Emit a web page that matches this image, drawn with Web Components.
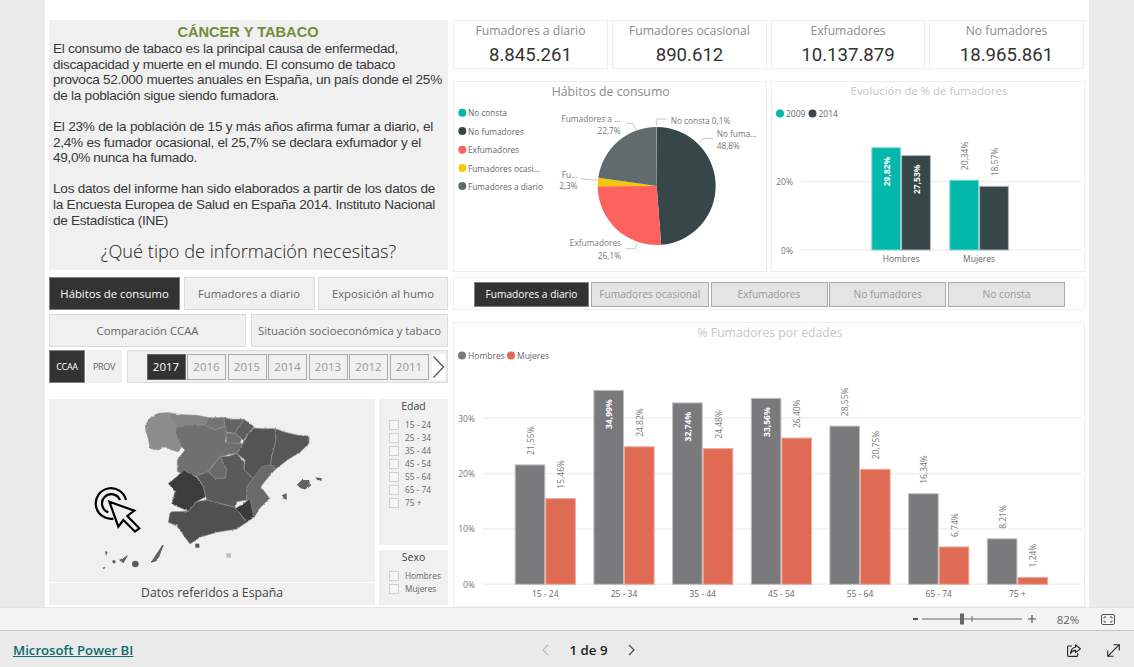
<!DOCTYPE html>
<html lang="es">
<head>
<meta charset="utf-8">
<title>Cáncer y tabaco</title>
<style>
html, body { margin: 0; height: 100%; overflow: hidden; background: #eaeaea; }
body { font-family: "Open Sans", "Noto Sans", sans-serif; }
</style>
</head>
<body>
<pbi-viewer>
    <pbi-text-card slot="left">
        <span slot="title">CÁNCER Y TABACO</span>
        <p>
            <pbi-text-line fit="345">El consumo de tabaco es la principal causa de enfermedad,</pbi-text-line>
            <pbi-text-line fit="342">discapacidad y muerte en el mundo. El consumo de tabaco</pbi-text-line>
            <pbi-text-line fit="389">provoca 52.000 muertes anuales en España, un país donde el 25%</pbi-text-line>
            <pbi-text-line fit="226">de la población sigue siendo fumadora.</pbi-text-line>
        </p>
        <p>
            <pbi-text-line fit="380">El 23% de la población de 15 y más años afirma fumar a diario, el</pbi-text-line>
            <pbi-text-line fit="368">2,4% es fumador ocasional, el 25,7% se declara exfumador y el</pbi-text-line>
            <pbi-text-line fit="144">49,0% nunca ha fumado.</pbi-text-line>
        </p>
        <p>
            <pbi-text-line fit="382">Los datos del informe han sido elaborados a partir de los datos de</pbi-text-line>
            <pbi-text-line fit="382">la Encuesta Europea de Salud en España 2014. Instituto Nacional</pbi-text-line>
            <pbi-text-line fit="115">de Estadística (INE)</pbi-text-line>
        </p>
        <span slot="question">¿Qué tipo de información necesitas?</span>
    </pbi-text-card>
    <pbi-button-row slot="left" columns="131px 131px 130px" height="33">
        <pbi-nav-button active>Hábitos de consumo</pbi-nav-button>
        <pbi-nav-button>Fumadores a diario</pbi-nav-button>
        <pbi-nav-button>Exposición al humo</pbi-nav-button>
    </pbi-button-row>
    <pbi-button-row slot="left" columns="197px 197px" height="33" gap="5px">
        <pbi-nav-button>Comparación CCAA</pbi-nav-button>
        <pbi-nav-button>Situación socioeconómica y tabaco</pbi-nav-button>
    </pbi-button-row>
    <pbi-year-slicer slot="left"></pbi-year-slicer>
    <pbi-filter-area slot="left">
        <pbi-spain-map slot="map"></pbi-spain-map>
        <pbi-check-slicer slot="edad" label="Edad" items="15 - 24,25 - 34,35 - 44,45 - 54,55 - 64,65 - 74,75 +"></pbi-check-slicer>
        <pbi-check-slicer slot="sexo" label="Sexo" items="Hombres,Mujeres"></pbi-check-slicer>
    </pbi-filter-area>

    <pbi-kpi-row slot="right">
        <pbi-kpi label="Fumadores a diario" value="8.845.261"></pbi-kpi>
        <pbi-kpi label="Fumadores ocasional" value="890.612"></pbi-kpi>
        <pbi-kpi label="Exfumadores" value="10.137.879"></pbi-kpi>
        <pbi-kpi label="No fumadores" value="18.965.861"></pbi-kpi>
    </pbi-kpi-row>
    <pbi-chart-row slot="right">
        <pbi-pie-chart></pbi-pie-chart>
        <pbi-column-chart chart="evolucion"></pbi-column-chart>
    </pbi-chart-row>
    <pbi-tab-strip slot="right">
        <pbi-nav-button tab active>Fumadores a diario</pbi-nav-button>
        <pbi-nav-button tab>Fumadores ocasional</pbi-nav-button>
        <pbi-nav-button tab>Exfumadores</pbi-nav-button>
        <pbi-nav-button tab>No fumadores</pbi-nav-button>
        <pbi-nav-button tab>No consta</pbi-nav-button>
    </pbi-tab-strip>
    <pbi-column-chart slot="right" chart="edades"></pbi-column-chart>
</pbi-viewer>
<pbi-zoom-bar></pbi-zoom-bar>
<pbi-footer-bar></pbi-footer-bar>

<script>
const FONT = '"Open Sans", "Noto Sans", sans-serif';
const BODY_FONT = '13.6px "Liberation Sans"';

const CHARTS = {
    evolucion: {
        box: [771, 81, 314, 191],
        title: 'Evolución de % de fumadores',
        titleX: 929, titleY: 90, titleSize: 11.4,
        zero: 250, perUnit: 3.43,
        ticks: [0, 20],
        gridFrom: 801, gridTo: 1082, tickX: 793,
        barWidth: 29.8, inside: 25,
        starts: [871.3, 949.3],
        catY: 258,
        legend: [[780, 'teal', '2009'], [812.5, 'dark', '2014']],
        legendY: 113.5,
        colors: { teal: ['#01b8aa', '#80dcd4'], dark: ['#374649', '#b0b8ba'] },
        series: ['teal', 'dark'],
        cats: [['Hombres', 29.82, 27.53], ['Mujeres', 20.34, 18.57]]
    },
    edades: {
        box: [453, 322, 632, 285],
        title: '% Fumadores por edades',
        titleX: 770, titleY: 332, titleSize: 12.2,
        zero: 584.3, perUnit: 5.54,
        ticks: [0, 10, 20, 30],
        gridFrom: 483, gridTo: 1082, tickX: 475,
        barWidth: 30.6, inside: 30,
        starts: [514.7, 593.4, 672.1, 750.8, 829.4, 908.1, 986.8],
        catY: 593,
        legend: [[462, 'grey', 'Hombres'], [511, 'red', 'Mujeres']],
        legendY: 355.5,
        colors: { grey: ['#7a7a7c', '#bdbdbd'], red: ['#e06b54', '#eea797'] },
        series: ['grey', 'red'],
        cats: [
            ['15 - 24', 21.55, 15.46], ['25 - 34', 34.99, 24.82], ['35 - 44', 32.74, 24.48],
            ['45 - 54', 33.56, 26.40], ['55 - 64', 28.55, 20.75], ['65 - 74', 16.34, 6.74],
            ['75 +', 8.21, 1.24]
        ]
    }
};

// base class, same render flow for every element
class PbiElement extends HTMLElement {
    constructor() {
        super();
        this.template = document.createElement('template');
        this.attachShadow({ mode: 'open' });
    }
    connectedCallback() {
        this.render();
    }
    render() {
        this.shadowRoot.innerHTML = '';
        this.template.innerHTML = this.html;
        this.shadowRoot.appendChild(this.template.content.cloneNode(true));
    }
}

class PbiViewer extends PbiElement {
    get html() {
        return `
        <style>
        :host { display: block; height: 607px; padding: 0 45px; box-sizing: border-box; }
        .canvas {
            background: #fff;
            height: 607px;
            box-sizing: border-box;
            padding: 20px 4px 0;
            display: grid;
            grid-template-columns: 399px 632px;
            column-gap: 5px;
            overflow: hidden;
        }
        .col { display: flex; flex-direction: column; min-width: 0; }
        </style>
        <div class="canvas">
            <div class="col"><slot name="left"></slot></div>
            <div class="col"><slot name="right"></slot></div>
        </div>`;
    }
}

class PbiTextCard extends PbiElement {
    get html() {
        return `
        <style>
        :host {
            display: block;
            height: 250px;
            box-sizing: border-box;
            background: #f0f0f0;
            padding: 3px 1px 0 4px;
            color: #383838;
            font: 13.6px/15.6px "Liberation Sans", Arial, sans-serif;
        }
        .title {
            text-align: center;
            color: #6f8f35;
            font-weight: bold;
            font-size: 14.6px;
            line-height: 18px;
            margin-right: 4px;
        }
        ::slotted(p) { margin: 0 0 15.6px; }
        .question {
            text-align: center;
            margin: -5px 3px 0 0;
            font: 300 18.2px/24px ${FONT};
            color: #222;
        }
        </style>
        <div class="title"><slot name="title"></slot></div>
        <slot></slot>
        <div class="question"><slot name="question"></slot></div>`;
    }
}

// one text line, spaced so it takes the width given in fit
class PbiTextLine extends PbiElement {
    get html() {
        const text = this.textContent;
        const ctx = document.createElement('canvas').getContext('2d');
        ctx.font = BODY_FONT;
        const spacing = (Number(this.getAttribute('fit')) - ctx.measureText(text).width) / text.length;
        return `
        <style>
        :host { display: block; white-space: nowrap; letter-spacing: ${spacing.toFixed(3)}px; }
        </style>
        <slot></slot>`;
    }
}

class PbiButtonRow extends PbiElement {
    get html() {
        return `
        <style>
        :host { display: block; margin-top: ${this.getAttribute('gap') ? 4 : 7}px; }
        .row {
            display: grid;
            grid-template-columns: ${this.getAttribute('columns')};
            column-gap: ${this.getAttribute('gap') || '3.5px'};
            height: ${this.getAttribute('height')}px;
        }
        </style>
        <div class="row"><slot></slot></div>`;
    }
}

class PbiNavButton extends PbiElement {
    get html() {
        const tab = this.hasAttribute('tab');
        const active = this.hasAttribute('active');
        let bg = '#f0f0f0', border = '#dcdcdc', color = '#666';
        if (tab) { bg = '#e4e4e4'; border = '#ababab'; color = '#999'; }
        if (active) { bg = '#333'; border = '#808080'; color = '#fff'; }
        return `
        <style>
        :host {
            display: flex;
            align-items: center;
            justify-content: center;
            box-sizing: border-box;
            min-width: 0;
            white-space: nowrap;
            padding-bottom: 1px;
            background: ${bg};
            border: 1.5px solid ${border};
            color: ${color};
            font: ${tab ? '10.2px' : '11.3px'} ${FONT};
        }
        </style>
        <slot></slot>`;
    }
}

class PbiYearSlicer extends PbiElement {
    get html() {
        const years = [2017, 2016, 2015, 2014, 2013, 2012, 2011];
        return `
        <style>
        :host { display: flex; height: 33px; margin-top: 3px; font-family: ${FONT}; }
        .mode {
            width: 36px;
            display: flex;
            align-items: center;
            justify-content: center;
            box-sizing: border-box;
            font-size: 9px;
            letter-spacing: -.3px;
            background: #f0f0f0;
            color: #666;
        }
        .mode.on { background: #333; color: #fff; border: 1px solid #808080; }
        .mode + .mode { margin-left: 1px; }
        .years {
            margin-left: 5px;
            flex: 1;
            box-sizing: border-box;
            background: #f0f0f0;
            border: 1.5px solid #dcdcdc;
            display: flex;
            align-items: center;
            padding-left: 18.5px;
            gap: 1.5px;
        }
        .year {
            width: 39px;
            height: 26px;
            box-sizing: border-box;
            border: 1.5px solid #ababab;
            display: flex;
            align-items: center;
            justify-content: center;
            color: #999;
            font-size: 11.5px;
        }
        .year.on { background: #333; color: #fff; border-color: #666; }
        .next { margin-left: 2px; width: 13px; height: 26px; background: #fff; flex: none; }
        svg { display: block; }
        </style>
        <div class="mode on">CCAA</div>
        <div class="mode">PROV</div>
        <div class="years">
            ${years.map((y, i) => `<div class="year ${i === 0 ? 'on' : ''}">${y}</div>`).join('')}
            <div class="next"><svg width="13" height="26" viewBox="0 0 13 26"><path d="M1.5 2.5 L11.5 13 L1.5 23.5" fill="none" stroke="#555" stroke-width="1.3"/></svg></div>
        </div>`;
    }
}

class PbiFilterArea extends PbiElement {
    get html() {
        return `
        <style>
        :host {
            display: grid;
            margin-top: 16px;
            grid-template-columns: 326px 69px;
            grid-template-rows: 146px 55px;
            column-gap: 4px;
            row-gap: 5px;
        }
        .map { grid-row: 1 / 3; }
        </style>
        <div class="map"><slot name="map"></slot></div>
        <slot name="edad"></slot>
        <slot name="sexo"></slot>`;
    }
}

class PbiSpainMap extends PbiElement {
    get html() {
        const regions = [
            ['#8c8c8c', '316,465 330,445 355,430 385,428 392,445 408,472 405,490 415,510 425,530 415,545 395,540 375,530 355,540 330,535 325,505 318,485'],
            ['#848484', '385,428 420,434 470,436 505,443 495,465 465,462 408,472 392,445'],
            ['#747474', '495,465 505,443 552,443 555,468 525,480 505,470'],
            ['#707070', '408,472 465,462 495,465 525,480 555,468 560,490 555,515 590,520 610,520 590,550 560,555 540,560 515,590 505,605 470,618 440,618 412,604 412,570 435,540 425,530 415,510 405,490'],
            ['#646464', '552,443 580,448 612,448 590,480 585,490 560,487 555,468'],
            ['#6e6e6e', '558,490 585,490 605,505 600,520 560,518'],
            ['#5e5e5e', '612,448 642,470 625,490 610,512 605,505 585,490 590,480'],
            ['#545454', '642,474 670,476 705,476 708,510 695,560 692,585 665,605 640,625 612,600 615,570 590,550 610,520 625,490'],
            ['#585858', '705,476 740,488 775,496 807,498 807,520 782,545 742,570 707,597 692,585 695,560 708,510'],
            ['#6a6a6a', '665,590 692,585 707,597 682,625 662,650 689,685 662,712 642,742 620,690 620,650 640,625'],
            ['#6a6a6a', '505,605 540,560 560,600 555,625 525,625'],
            ['#5a5a5a', '470,618 505,605 525,625 555,625 560,600 540,560 570,558 590,550 612,575 612,600 640,625 620,650 620,690 590,695 585,712 500,690 490,650'],
            ['#3c3c3c', '432,600 470,622 490,650 497,680 470,695 445,724 395,702 405,665 385,640 405,625'],
            ['#505050', '395,725 445,724 470,695 500,690 585,712 600,730 620,757 590,777 530,787 480,802 450,822 435,802 410,767 385,757 390,730'],
            ['#3a3a3a', '585,715 605,705 630,686 642,742 620,757 600,730']
        ];
        const islands = [
            '770,645 785,630 808,630 810,650 790,660',
            '826,622 845,625 845,633 830,628',
            '727,675 740,670 740,690 730,685',
            '237,870 265,855 250,880',
            '332,878 347,855 367,825 371,825 358,860 345,875',
            '195,843 203,846 198,858',
            '187,893 197,890 192,898'
        ];
        return `
        <style>
        :host { display: block; height: 206px; }
        .map { background: #f0f0f0; height: 183px; }
        .caption {
            margin-top: 1px;
            height: 22px;
            box-sizing: border-box;
            padding-bottom: 4px;
            background: #f0f0f0;
            display: flex;
            align-items: center;
            justify-content: center;
            color: #444;
            font: 12.2px ${FONT};
        }
        svg { display: block; }
        </style>
        <div class="map">
            <svg width="326" height="183" viewBox="27 387 978 549">
                <defs>
                    <filter id="rough" x="-5%" y="-5%" width="110%" height="110%" color-interpolation-filters="sRGB">
                        <feTurbulence type="fractalNoise" baseFrequency="0.13" numOctaves="2" seed="4" result="n"/>
                        <feDisplacementMap in="SourceGraphic" in2="n" scale="7" xChannelSelector="R" yChannelSelector="G"/>
                        <feGaussianBlur stdDeviation="0.9"/>
                    </filter>
                </defs>
                <g filter="url(#rough)" stroke="#8e8e8e" stroke-width="2" stroke-linejoin="round">
                    ${regions.map(r => `<polygon fill="${r[0]}" points="${r[1]}"/>`).join('')}
                </g>
                <g fill="#626262" filter="url(#rough)">
                    ${islands.map(p => `<polygon points="${p}"/>`).join('')}
                </g>
                <circle cx="286" cy="882" r="10" fill="#5c5c5c"/>
                <circle cx="222" cy="875" r="5" fill="#5c5c5c"/>
                <rect x="466" y="821" width="12" height="12" fill="#555"/>
                <rect x="559" y="850" width="14" height="13" fill="#bcbcbc"/>
                <g fill="none" stroke="#000" stroke-width="6.5">
                    <path d="M258 690 A46 46 0 1 0 220 746"/>
                    <path d="M240 690 A28 28 0 1 0 205 727"/>
                </g>
                <path d="M208 695 L283 722 L262 738 L298 775 L285 785 L250 750 L235 770 Z" fill="#f0f0f0" stroke="#000" stroke-width="6.5" stroke-linejoin="miter"/>
            </svg>
        </div>
        <div class="caption">Datos referidos a España</div>`;
    }
}

class PbiCheckSlicer extends PbiElement {
    get html() {
        const items = this.getAttribute('items').split(',');
        return `
        <style>
        :host {
            display: block;
            background: #f0f0f0;
            box-sizing: border-box;
            padding-top: 1px;
            font-family: ${FONT};
            color: #666;
            overflow: hidden;
        }
        .head { text-align: center; font-size: 10.5px; line-height: 13px; color: #444; margin-bottom: 5px; }
        .item { display: flex; align-items: center; height: 13px; padding-left: 10px; font-size: 8.3px; }
        .box { width: 10px; height: 10px; box-sizing: border-box; border: 1px solid #cfcfcf; margin-right: 6px; background: #f4f4f4; }
        </style>
        <div class="head">${this.getAttribute('label')}</div>
        ${items.map(i => `<div class="item"><span class="box"></span>${i}</div>`).join('')}`;
    }
}

class PbiKpiRow extends PbiElement {
    get html() {
        return `
        <style>
        :host { display: grid; grid-template-columns: 155px 155px 154px 155px; column-gap: 4px; height: 49px; }
        </style>
        <slot></slot>`;
    }
}

class PbiKpi extends PbiElement {
    get html() {
        return `
        <style>
        :host {
            display: flex;
            flex-direction: column;
            align-items: center;
            box-sizing: border-box;
            border: 1px solid #eeeeee;
            padding-top: 2px;
        }
        .label { font: 12.2px/16px ${FONT}; color: #8c8c8c; }
        .value { font: 18.6px/26px Roboto, ${FONT}; color: #333; margin-top: 3px; }
        </style>
        <div class="label">${this.getAttribute('label')}</div>
        <div class="value">${this.getAttribute('value')}</div>`;
    }
}

class PbiChartRow extends PbiElement {
    get html() {
        return `
        <style>
        :host { display: grid; grid-template-columns: 314px 314px; column-gap: 4px; height: 191px; margin-top: 12px; }
        </style>
        <slot></slot>`;
    }
}

class PbiPieChart extends PbiElement {
    get html() {
        const cx = 656.7, cy = 186, r = 59;
        const slices = [
            ['#374649', 48.8], ['#fd625e', 26.1], ['#f2c80f', 2.3], ['#5f6b6d', 22.7], ['#7f9a9a', 0.1]
        ];
        let acc = 0;
        const paths = slices.map(s => {
            const a0 = acc / 100 * 2 * Math.PI;
            acc += s[1];
            const a1 = acc / 100 * 2 * Math.PI;
            const large = s[1] > 50 ? 1 : 0;
            const p = a => `${(cx + r * Math.sin(a)).toFixed(2)} ${(cy - r * Math.cos(a)).toFixed(2)}`;
            return `<path d="M${cx} ${cy} L${p(a0)} A${r} ${r} 0 ${large} 1 ${p(a1)} Z" fill="${s[0]}"/>`;
        }).join('');
        const legend = [
            ['#01b8aa', 'No consta', 112.7], ['#374649', 'No fumadores', 131], ['#fd625e', 'Exfumadores', 149.7],
            ['#f2c80f', 'Fumadores ocasi...', 168], ['#5f6b6d', 'Fumadores a diario', 186]
        ];
        const labels = [
            [620.7, 118, 'end', 'Fumadores a ...'], [620.7, 130, 'end', '22,7%'],
            [670.7, 120, 'start', 'No consta 0,1%'],
            [716.7, 133.3, 'start', 'No fuma...'], [716.7, 145, 'start', '48,8%'],
            [577.7, 174, 'end', 'Fu...'], [577.7, 185, 'end', '2,3%'],
            [621, 242.7, 'end', 'Exfumadores'], [621, 255, 'end', '26,1%']
        ];
        const lines = [
            '625.7,123.3 632.7,123.3 636,130', '656.7,125.7 656.7,119 666.7,119',
            '698.3,143.3 704,138.3 713.3,138.3', '580,178.7 597,180', '625.7,248.7 635,248.7 637.3,243.3'
        ];
        return `
        <style>
        :host { display: block; box-sizing: border-box; border: 1px solid #eeeeee; height: 191px; }
        svg { display: block; position: relative; left: -1px; top: -1px; font-family: ${FONT}; }
        text { dominant-baseline: central; }
        </style>
        <svg width="314" height="191" viewBox="453 81 314 191">
            <text x="610.7" y="91" text-anchor="middle" font-size="12.3" fill="#8c8c8c">Hábitos de consumo</text>
            ${legend.map(l => `<circle cx="462.3" cy="${l[2]}" r="4" fill="${l[0]}"/><text x="468" y="${l[2]}" font-size="8.3" fill="#666">${l[1]}</text>`).join('')}
            ${paths}
            ${lines.map(l => `<polyline points="${l}" fill="none" stroke="#c8c8c8" stroke-width="1"/>`).join('')}
            ${labels.map(l => `<text x="${l[0]}" y="${l[1]}" text-anchor="${l[2]}" font-size="8.3" fill="#777">${l[3]}</text>`).join('')}
        </svg>`;
    }
}

class PbiColumnChart extends PbiElement {
    get html() {
        const c = CHARTS[this.getAttribute('chart')];
        const [bx, by, bw, bh] = c.box;
        const fmt = v => v.toFixed(2).replace('.', ',') + '%';
        let grid = '', bars = '', labels = '', cats = '';
        c.ticks.forEach(t => {
            const y = c.zero - t * c.perUnit;
            grid += `<line x1="${c.gridFrom}" x2="${c.gridTo}" y1="${y}" y2="${y}" stroke="#f0f0f0" stroke-width="1.5"/>`;
            labels += `<text x="${c.tickX}" y="${y}" text-anchor="end" font-size="8.5" fill="#777">${t}%</text>`;
        });
        c.cats.forEach((cat, i) => {
            const x0 = c.starts[i];
            cats += `<text x="${x0 + c.barWidth}" y="${c.catY}" text-anchor="middle" font-size="8.5" fill="#666">${cat[0]}</text>`;
            [cat[1], cat[2]].forEach((v, s) => {
                const col = c.colors[c.series[s]];
                const top = c.zero - v * c.perUnit;
                const x = x0 + s * c.barWidth;
                bars += `<rect x="${x + .5}" y="${top}" width="${c.barWidth - 1}" height="${c.zero - top}" fill="${col[0]}" stroke="${col[1]}" stroke-width="1"/>`;
                const inside = v > c.inside;
                const ly = inside ? top + 9 : top - 10;
                labels += `<text transform="translate(${x + c.barWidth / 2} ${ly}) rotate(-90)" text-anchor="${inside ? 'end' : 'start'}" font-size="8.5" font-weight="${inside ? 700 : 400}" fill="${inside ? '#fff' : '#777'}">${fmt(v)}</text>`;
            });
        });
        const legend = c.legend.map(l => {
            const col = c.colors[l[1]][0];
            return `<circle cx="${l[0]}" cy="${c.legendY}" r="4" fill="${col}"/><text x="${l[0] + 6}" y="${c.legendY}" font-size="8.5" fill="#666">${l[2]}</text>`;
        }).join('');
        return `
        <style>
        :host { display: block; box-sizing: border-box; border: 1px solid #eeeeee; height: ${bh}px; ${bh > 200 ? 'margin-top: 12px;' : ''} }
        svg { display: block; position: relative; left: -1px; top: -1px; font-family: ${FONT}; }
        text { dominant-baseline: central; }
        </style>
        <svg width="${bw}" height="${bh}" viewBox="${bx} ${by} ${bw} ${bh}">
            <text x="${c.titleX}" y="${c.titleY}" text-anchor="middle" font-size="${c.titleSize}" fill="#c6c6c6">${c.title}</text>
            ${legend}${grid}${bars}${labels}${cats}
        </svg>`;
    }
}

class PbiTabStrip extends PbiElement {
    get html() {
        return `
        <style>
        :host {
            display: block;
            margin-top: 5px;
            height: 33px;
            box-sizing: border-box;
            border: 1px solid #f0f0f0;
            padding: 4px 0 0 20px;
        }
        .tabs {
            display: grid;
            grid-template-columns: 115px 118px 117px 117px 117px;
            column-gap: 1.75px;
            height: 25px;
        }
        </style>
        <div class="tabs"><slot></slot></div>`;
    }
}

class PbiZoomBar extends PbiElement {
    get html() {
        return `
        <style>
        :host {
            display: flex;
            justify-content: flex-end;
            align-items: center;
            box-sizing: border-box;
            background: #f3f3f3;
            border-top: 1px solid #e4e4e4;
            border-bottom: 1px solid #c8c8c8;
            height: 24px;
            font-family: ${FONT};
            color: #666;
            padding-right: 19px;
        }
        svg { display: block; }
        .pct { font-size: 11.5px; width: 28px; text-align: center; margin-left: 9px; margin-right: 19px; }
        </style>
        <svg width="132" height="16" viewBox="-2 0 132 16">
            <path d="M-2 8 H3" stroke="#555" stroke-width="2"/>
            <path d="M7 8 H107" stroke="#666" stroke-width="1"/>
            <rect x="45" y="2.5" width="4" height="11" fill="#666"/>
            <path d="M57 5 V11" stroke="#666"/>
            <path d="M113 8 H121 M117 4 V12" stroke="#555" stroke-width="1.2"/>
        </svg>
        <div class="pct">82%</div>
        <svg width="14" height="11" viewBox="0 0 14 11">
            <rect x=".5" y=".5" width="13" height="10" rx="1.5" fill="none" stroke="#555"/>
            <path d="M3 4.5 V3 H5 M9 3 H11 V4.5 M11 6.5 V8 H9 M5 8 H3 V6.5" fill="none" stroke="#555"/>
        </svg>`;
    }
}

class PbiFooterBar extends PbiElement {
    get html() {
        return `
        <style>
        :host {
            display: grid;
            grid-template-columns: 541px 95px 1fr;
            align-items: center;
            height: 36px;
            box-sizing: border-box;
            padding-top: 2px;
            background: #eaeaea;
            font-family: ${FONT};
        }
        a { margin-left: 13px; color: #0b6a6e; font-size: 13.2px; font-weight: 600; text-decoration: underline; }
        .pager { display: flex; align-items: center; justify-content: space-between; font-size: 13.3px; font-weight: 600; color: #222; }
        .icons { display: flex; justify-content: flex-end; gap: 26px; padding-right: 14px; }
        svg { display: block; }
        </style>
        <a href="#">Microsoft Power BI</a>
        <div class="pager">
            <svg width="8" height="12" viewBox="0 0 8 12"><path d="M7 1 L2 6 L7 11" fill="none" stroke="#bbb" stroke-width="1.1"/></svg>
            <span>1 de 9</span>
            <svg width="8" height="12" viewBox="0 0 8 12"><path d="M1 1 L6 6 L1 11" fill="none" stroke="#444" stroke-width="1.1"/></svg>
        </div>
        <div class="icons">
            <svg width="14" height="13" viewBox="0 0 14 13"><path d="M5 2 H1.5 Q.6 2 .6 3 V11 Q.6 12.4 2 12.4 H9.5 Q10.8 12.4 10.8 11 V9" fill="none" stroke="#222" stroke-width="1.1"/><path d="M8.5 .8 L13.4 4.8 L8.5 8.6 V6.4 Q5 6.2 3.6 9.6 Q3.8 3.8 8.5 3.2 Z" fill="none" stroke="#222" stroke-width="1.1" stroke-linejoin="round"/></svg>
            <svg width="13" height="13" viewBox="0 0 13 13"><path d="M.7 12.3 L12.3 .7 M6.5 .7 H12.3 V6.5 M.7 6.5 V12.3 H6.5" fill="none" stroke="#222" stroke-width="1.1"/></svg>
        </div>`;
    }
}

const ELEMENTS = {
    'pbi-viewer': PbiViewer, 'pbi-text-card': PbiTextCard, 'pbi-text-line': PbiTextLine,
    'pbi-button-row': PbiButtonRow, 'pbi-nav-button': PbiNavButton, 'pbi-year-slicer': PbiYearSlicer,
    'pbi-filter-area': PbiFilterArea, 'pbi-spain-map': PbiSpainMap, 'pbi-check-slicer': PbiCheckSlicer,
    'pbi-kpi-row': PbiKpiRow, 'pbi-kpi': PbiKpi, 'pbi-chart-row': PbiChartRow,
    'pbi-pie-chart': PbiPieChart, 'pbi-column-chart': PbiColumnChart, 'pbi-tab-strip': PbiTabStrip,
    'pbi-zoom-bar': PbiZoomBar, 'pbi-footer-bar': PbiFooterBar
};
Object.keys(ELEMENTS).forEach(tag => window.customElements.define(tag, ELEMENTS[tag]));
</script>
</body>
</html>
